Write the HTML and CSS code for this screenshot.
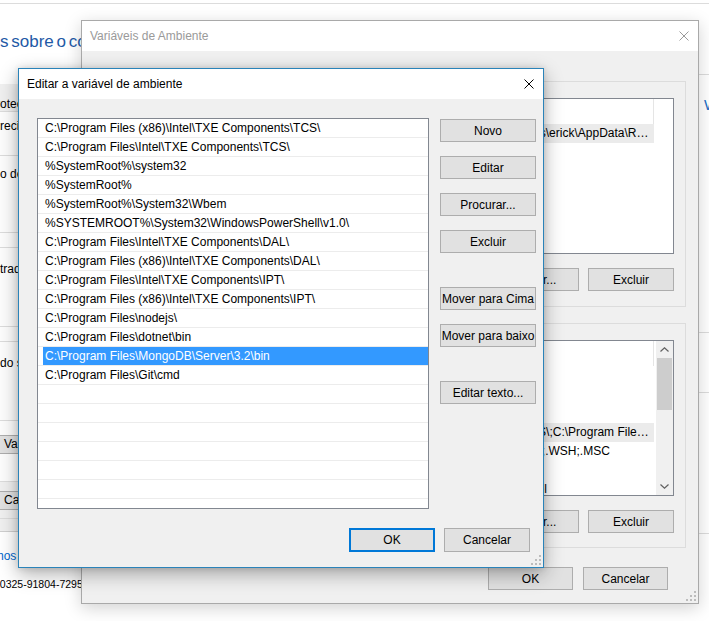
FILE: index.html
```html
<!DOCTYPE html>
<html lang="pt-BR">

<head>
    <meta charset="UTF-8">
    <meta name="viewport" content="width=device-width, initial-scale=1.0">
    <title>Editar a variável de ambiente</title>
    <link rel="stylesheet" href="styles.css">
</head>

<body>
    <div class="desktop">

        <!-- Painel de controle ao fundo -->
        <div class="page">
            <div class="page_main">
                <div class="page_rule"></div>
                <h1 class="page_title">s sobre o computador</h1>

                <div class="sysprops">
                    <div class="sys_tabs"><span class="sys_tab">Proteção do Sistema</span></div>
                    <div class="sys_page">
                        <div class="sys_note">reciso fazer logon como administrador</div>
                        <div class="sys_group sys_group_first"><p>o de memória virtual</p></div>
                        <div class="sys_group"><p>trada</p></div>
                        <div class="sys_group"><p>do sistema</p></div>
                        <div class="sys_btn">Variáveis de Ambiente...</div>
                    </div>
                    <div class="sys_footer">
                        <div class="sys_btn sys_btn_cancel">Cancelar</div>
                    </div>
                    <div class="sys_edge"></div>
                </div>

                <p class="page_link">Termos de Licença para Software Microsoft</p>
                <p class="page_id">00325-91804-72951-AAOEM</p>
            </div>

            <div class="page_side">
                <div class="page_rule"></div>
                <div class="side_line side_line_top"></div>
                <div class="side_logo">W</div>
                <div class="side_line side_line_a"></div>
                <div class="side_line side_line_b"></div>
                <div class="side_line side_line_c"></div>
            </div>
        </div>

        <!-- Variáveis de Ambiente (janela inativa) -->
        <div class="window back">
            <div class="titlebar">
                <span class="title">Variáveis de Ambiente</span>
                <span class="close">
                    <svg width="10" height="10" viewBox="0 0 10 10">
                        <path d="M0.5 0.5L9.5 9.5M9.5 0.5L0.5 9.5" stroke="#9a9a9a" stroke-width="1" fill="none" />
                    </svg>
                </span>
            </div>

            <div class="back_body">
                <div class="group">
                    <div class="listview lv_user">
                        <div class="lv_body">
                            <div class="lv_row lv_header">
                                <span class="lv_name">Variável</span>
                                <span class="lv_value">Valor</span>
                            </div>
                            <div class="lv_row lv_selected">
                                <span class="lv_name">Path</span>
                                <span class="lv_value">C:\Users\erick\AppData\Local\Microsoft\WindowsApps;C:\Users\erick\AppData\Roaming\npm</span>
                            </div>
                            <div class="lv_row">
                                <span class="lv_name">TEMP</span>
                                <span class="lv_value">%USERPROFILE%\AppData\Local\Temp</span>
                            </div>
                            <div class="lv_row">
                                <span class="lv_name">TMP</span>
                                <span class="lv_value">%USERPROFILE%\AppData\Local\Temp</span>
                            </div>
                        </div>
                    </div>
                    <div class="group_buttons">
                        <button class="btn btn_group">Novo...</button>
                        <button class="btn btn_group">Editar...</button>
                        <button class="btn btn_group">Excluir</button>
                    </div>
                </div>

                <div class="group">
                    <div class="listview lv_system">
                        <div class="lv_body">
                            <div class="lv_row lv_header">
                                <span class="lv_name">Variável</span>
                                <span class="lv_value">Valor</span>
                            </div>
                            <div class="lv_row">
                                <span class="lv_name">ComSpec</span>
                                <span class="lv_value">%SystemRoot%\system32\cmd.exe</span>
                            </div>
                            <div class="lv_row">
                                <span class="lv_name">NUMBER_OF_PROCESSORS</span>
                                <span class="lv_value">4</span>
                            </div>
                            <div class="lv_row">
                                <span class="lv_name">OS</span>
                                <span class="lv_value">Windows_NT</span>
                            </div>
                            <div class="lv_row lv_selected">
                                <span class="lv_name">Path</span>
                                <span class="lv_value">C:\Program Files (x86)\Intel\TXE Components\TCS\;C:\Program Files\Intel\TXE Components\TCS\;%SystemRoot%\system32</span>
                            </div>
                            <div class="lv_row">
                                <span class="lv_name">PATHEXT</span>
                                <span class="lv_value">.COM;.EXE;.BAT;.CMD;.VBS;.VBE;.JS;.JSE;.WSF;.WSH;.MSC</span>
                            </div>
                            <div class="lv_row">
                                <span class="lv_name">PROCESSOR_ARCHITECTURE</span>
                                <span class="lv_value">AMD64</span>
                            </div>
                            <div class="lv_row">
                                <span class="lv_name">PROCESSOR_IDENTIFIER</span>
                                <span class="lv_value">Intel64 Family 6 Model 55 Stepping 8, GenuineIntel</span>
                            </div>
                        </div>
                        <div class="scrollbar">
                            <span class="scroll_arrow">
                                <svg width="9" height="5" viewBox="0 0 9 5">
                                    <path d="M0.5 4.5L4.5 0.8L8.5 4.5" stroke="#606060" stroke-width="1.2" fill="none" />
                                </svg>
                            </span>
                            <span class="scroll_track"><span class="scroll_thumb"></span></span>
                            <span class="scroll_arrow">
                                <svg width="9" height="5" viewBox="0 0 9 5">
                                    <path d="M0.5 0.5L4.5 4.2L8.5 0.5" stroke="#606060" stroke-width="1.2" fill="none" />
                                </svg>
                            </span>
                        </div>
                    </div>
                    <div class="group_buttons">
                        <button class="btn btn_group">Novo...</button>
                        <button class="btn btn_group">Editar...</button>
                        <button class="btn btn_group">Excluir</button>
                    </div>
                </div>

                <div class="footer back_footer">
                    <button class="btn btn_back">OK</button>
                    <button class="btn btn_back">Cancelar</button>
                </div>
            </div>

            <svg class="grip" width="10" height="10" viewBox="0 0 10 10">
                <rect x="8" y="0" width="2" height="2" />
                <rect x="4" y="4" width="2" height="2" />
                <rect x="8" y="4" width="2" height="2" />
                <rect x="0" y="8" width="2" height="2" />
                <rect x="4" y="8" width="2" height="2" />
                <rect x="8" y="8" width="2" height="2" />
            </svg>
        </div>

        <!-- Editar a variável de ambiente (janela ativa) -->
        <div class="window front">
            <div class="titlebar">
                <span class="title">Editar a variável de ambiente</span>
                <span class="close">
                    <svg width="10" height="10" viewBox="0 0 10 10">
                        <path d="M0.5 0.5L9.5 9.5M9.5 0.5L0.5 9.5" stroke="#000" stroke-width="1" fill="none" />
                    </svg>
                </span>
            </div>

            <div class="front_body">
                <div class="front_main">
                    <ul class="path_list">
                        <li>C:\Program Files (x86)\Intel\TXE Components\TCS\</li>
                        <li>C:\Program Files\Intel\TXE Components\TCS\</li>
                        <li>%SystemRoot%\system32</li>
                        <li>%SystemRoot%</li>
                        <li>%SystemRoot%\System32\Wbem</li>
                        <li>%SYSTEMROOT%\System32\WindowsPowerShell\v1.0\</li>
                        <li>C:\Program Files\Intel\TXE Components\DAL\</li>
                        <li>C:\Program Files (x86)\Intel\TXE Components\DAL\</li>
                        <li>C:\Program Files\Intel\TXE Components\IPT\</li>
                        <li>C:\Program Files (x86)\Intel\TXE Components\IPT\</li>
                        <li>C:\Program Files\nodejs\</li>
                        <li>C:\Program Files\dotnet\bin</li>
                        <li class="selected">C:\Program Files\MongoDB\Server\3.2\bin</li>
                        <li>C:\Program Files\Git\cmd</li>
                        <li></li>
                        <li></li>
                        <li></li>
                        <li></li>
                        <li></li>
                        <li></li>
                        <li></li>
                    </ul>

                    <div class="side_buttons">
                        <button class="btn btn_side">Novo</button>
                        <button class="btn btn_side">Editar</button>
                        <button class="btn btn_side">Procurar...</button>
                        <button class="btn btn_side">Excluir</button>
                        <button class="btn btn_side btn_gap">Mover para Cima</button>
                        <button class="btn btn_side">Mover para baixo</button>
                        <button class="btn btn_side btn_gap">Editar texto...</button>
                    </div>
                </div>

                <div class="footer front_footer">
                    <button class="btn btn_front btn_default">OK</button>
                    <button class="btn btn_front">Cancelar</button>
                </div>
            </div>

            <svg class="grip" width="10" height="10" viewBox="0 0 10 10">
                <rect x="8" y="0" width="2" height="2" />
                <rect x="4" y="4" width="2" height="2" />
                <rect x="8" y="4" width="2" height="2" />
                <rect x="0" y="8" width="2" height="2" />
                <rect x="4" y="8" width="2" height="2" />
                <rect x="8" y="8" width="2" height="2" />
            </svg>
        </div>

    </div>
</body>

</html>
```

FILE: styles.css
```css
* {
    margin: 0px;
    padding: 0px;
    box-sizing: border-box;
}

body {
    background-color: #fff;
}

ul {
    list-style: none;
}

button {
    font: inherit;
    color: inherit;
}

.desktop {
    position: relative;
    width: 709px;
    height: 621px;
    overflow: hidden;
    background-color: #fff;
    font-family: "Liberation Sans", Arial, sans-serif;
    font-size: 12px;
    color: #000;
}


/* -------------------------painel ao fundo------------------------- */
.page {
    position: absolute;
    inset: 0px;
    display: flex;
}

.page_main {
    flex: 1;
    min-width: 0px;
    overflow: hidden;
    white-space: nowrap;
}

.page_side {
    width: 11px;
    overflow: hidden;
}

.page_rule {
    margin-top: 3px;
    border-top: 1px solid #dcdcdc;
}

.page_title {
    margin-top: 27px;
    font-size: 17px;
    font-weight: normal;
    line-height: 22px;
    word-spacing: -2px;
    color: #1f5aa6;
}

.sysprops {
    margin-top: 31px;
}

.sys_tabs {
    height: 28px;
    padding-top: 12px;
    line-height: 16px;
    background-color: #f0f0f0;
    border-bottom: 1px solid #dcdcdc;
}

.sys_tab {
    margin-left: -12px;
}

.sys_page {
    height: 370px;
    background-color: #fdfdfd;
    border-bottom: 1px solid #dcdcdc;
}

.sys_note {
    height: 44px;
    padding-top: 6px;
    line-height: 16px;
    border-bottom: 1px solid #dcdcdc;
}

.sys_group {
    height: 80px;
    margin-top: 14px;
    padding-top: 13px;
    line-height: 16px;
    border-top: 1px solid #dcdcdc;
    border-bottom: 1px solid #dcdcdc;
}

.sys_group_first {
    height: 77px;
    margin-top: 0px;
    padding-top: 10px;
    border-top: none;
}

.sys_btn {
    width: 160px;
    height: 19px;
    margin: 14px 0px 0px -1px;
    padding-left: 4px;
    line-height: 17px;
    background-color: #e1e1e1;
    border: 1px solid #adadad;
}

.sys_footer {
    height: 37px;
    padding-top: 1px;
    background-color: #f0f0f0;
    border-bottom: 1px solid #dcdcdc;
}

.sys_btn_cancel {
    margin-top: 8px;
}

.sys_edge {
    height: 13px;
    background-color: #f0f0f0;
    border-bottom: 1px solid #cfcfcf;
}

.page_link {
    margin: 16px 0px 0px -23px;
    line-height: 16px;
    color: #0066cc;
}

.page_id {
    margin: 12px 0px 0px -6px;
    font-size: 10.5px;
    line-height: 16px;
}

.side_line {
    border-top: 1px solid #dcdcdc;
}

.side_line_top {
    margin-top: 70px;
}

.side_logo {
    margin-top: 22px;
    padding-left: 6px;
    font-size: 15px;
    line-height: 16px;
    color: #1f6fc5;
}

.side_line_a {
    margin-top: 219px;
}

.side_line_b {
    margin-top: 59px;
}

.side_line_c {
    margin-top: 140px;
}


/* -------------------------janelas------------------------- */
.window {
    position: absolute;
    display: flex;
    flex-direction: column;
    background-color: #f0f0f0;
}

.back {
    left: 81px;
    top: 20px;
    width: 618px;
    height: 584px;
    border: 1px solid #a9a9a9;
    box-shadow: 0px 4px 16px rgba(0, 0, 0, 0.18);
}

.front {
    left: 18px;
    top: 68px;
    width: 526px;
    height: 500px;
    border: 1px solid #2a83b9;
    box-shadow: 0px 6px 18px rgba(0, 0, 0, 0.32), 0px 0px 6px rgba(0, 0, 0, 0.12);
}

.titlebar {
    flex: none;
    display: flex;
    align-items: center;
    height: 30px;
    padding-left: 8px;
    background-color: #fff;
}

.title {
    flex: 1;
}

.back .title {
    color: #9a9a9a;
}

.close {
    display: flex;
    align-items: center;
    justify-content: center;
    width: 28px;
    height: 30px;
}

.grip {
    position: absolute;
    right: 2px;
    bottom: 2px;
    fill: #bcbcbc;
}


/* -------------------------botões------------------------- */
.btn {
    padding: 0px;
    background-color: #e1e1e1;
    border: 1px solid #adadad;
    text-align: center;
    white-space: nowrap;
}

.btn_default {
    border: 2px solid #0078d7;
}

.footer {
    display: flex;
    justify-content: flex-end;
}


/* -------------------------Variáveis de Ambiente------------------------- */
.back_body {
    flex: 1;
    display: flex;
    flex-direction: column;
    padding: 30px 12px 0px;
}

.group {
    height: 226px;
    padding: 16px 11px 0px;
    border: 1px solid #dcdcdc;
}

.group + .group {
    height: 225px;
    margin-top: 16px;
}

.listview {
    display: flex;
    height: 156px;
    background-color: #fff;
    border: 1px solid #828790;
    overflow: hidden;
}

.lv_body {
    flex: 1;
    min-width: 0px;
}

.lv_row {
    display: flex;
    width: 547px;
    height: 19px;
    line-height: 19px;
    white-space: nowrap;
}

.lv_header {
    height: 25px;
    line-height: 25px;
}

.lv_header span {
    border-right: 1px solid #e5e5e5;
}

.lv_name,
.lv_value {
    flex: none;
    overflow: hidden;
    text-overflow: ellipsis;
    padding: 0px 6px;
}

.lv_value {
    flex: 1;
    padding-right: 3px;
}

.lv_user .lv_name {
    width: 94px;
}

.lv_system .lv_name {
    width: 161px;
}

.lv_selected {
    background-color: #ebebeb;
}

.scrollbar {
    display: flex;
    flex-direction: column;
    width: 17px;
    background-color: #f0f0f0;
}

.scroll_arrow {
    display: flex;
    align-items: center;
    justify-content: center;
    height: 17px;
}

.scroll_track {
    flex: 1;
    padding: 0px 1px;
}

.scroll_thumb {
    display: block;
    height: 52px;
    background-color: #cdcdcd;
}

.group_buttons {
    display: flex;
    justify-content: flex-end;
    gap: 9px;
    margin-top: 14px;
}

.btn_group {
    width: 86px;
    height: 23px;
}

.back_footer {
    gap: 10px;
    margin-top: 19px;
    padding-right: 18px;
}

.btn_back {
    width: 85px;
    height: 23px;
}


/* -------------------------Editar a variável------------------------- */
.front_body {
    flex: 1;
    padding: 19px 0px 0px 18px;
}

.front_main {
    display: flex;
    gap: 11px;
}

.path_list {
    width: 392px;
    height: 391px;
    background-color: #fff;
    border: 1px solid #828790;
    overflow: hidden;
}

.path_list li {
    height: 19px;
    padding-left: 7px;
    line-height: 19px;
    white-space: nowrap;
    border-bottom: 1px solid #ececec;
}

/* a seleção começa um pouco à direita da borda */
.path_list .selected {
    color: #fff;
    background: linear-gradient(#3399ff, #3399ff) 5px 0px / calc(100% - 5px) 18px no-repeat;
}

.side_buttons {
    display: flex;
    flex-direction: column;
    gap: 14px;
    width: 96px;
    padding-top: 1px;
}

.btn_side {
    height: 23px;
}

.btn_gap {
    margin-top: 20px;
}

.front_footer {
    gap: 9px;
    margin-top: 19px;
    padding-right: 13px;
}

.btn_front {
    width: 86px;
    height: 24px;
}
```
